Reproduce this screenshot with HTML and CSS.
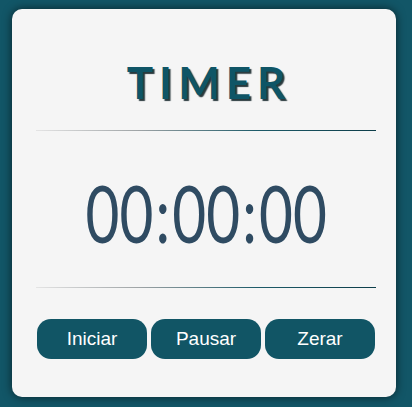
FILE: index.html
```html
<!DOCTYPE html>
<html lang="pt-BR">
<head>
<meta charset="utf-8">
<title>Timer</title>
<link rel="stylesheet" href="styles.css">
</head>
<body>
<main class="card">
  <h1 class="title">TIMER</h1>
  <div class="divider"></div>
  <div class="display"><span class="digits">00<span class="colon">:</span>00<span class="colon">:</span>00</span></div>
  <div class="divider"></div>
  <div class="controls">
    <button class="btn">Iniciar</button>
    <button class="btn">Pausar</button>
    <button class="btn">Zerar</button>
  </div>
</main>
</body>
</html>
```
FILE: styles.css
```css
html, body {
  margin: 0;
  padding: 0;
}
body {
  background: #125667;
  width: 412px;
  height: 407px;
  box-sizing: border-box;
  padding: 9px 16px 10px 12px;
  font-family: "Lato", "Liberation Sans", sans-serif;
}
.card {
  width: 384px;
  height: 388px;
  box-sizing: border-box;
  background: #f5f5f5;
  border-radius: 10px;
  box-shadow: 0 0 10px rgba(0, 0, 0, 0.6);
  display: flex;
  flex-direction: column;
  align-items: center;
  padding: 41px 20px 0 24px;
}
.title {
  margin: 0;
  height: 64px;
  font-size: 44px;
  line-height: 64px;
  font-weight: 700;
  letter-spacing: 6px;
  padding-left: 6px;
  color: #0f5566;
  text-shadow: 2px 2px 1px #2a3a3e;
}
.divider {
  width: 340px;
  height: 1px;
  flex: none;
  background: linear-gradient(90deg, #e4e4e4 0%, #9fa4a6 30%, #1d5b69 65%, #0d3d49 100%);
}
.title + .divider {
  margin-top: 16px;
}
.display {
  height: 156px;
  box-sizing: border-box;
  padding-top: 6px;
  display: flex;
  align-items: center;
  justify-content: center;
}
.digits {
  display: inline-block;
  font-size: 80px;
  font-weight: 400;
  color: #2f4b62;
  transform: scaleX(0.73);
}
.colon {
  margin: 0 3px;
}
.controls {
  margin-top: 31px;
  display: flex;
  gap: 4px;
}
.btn {
  width: 110px;
  height: 40px;
  border: none;
  border-radius: 14px;
  background: #115565;
  color: #ffffff;
  font-family: "Liberation Sans", Arial, sans-serif;
  font-size: 19px;
  padding: 0;
}
```
